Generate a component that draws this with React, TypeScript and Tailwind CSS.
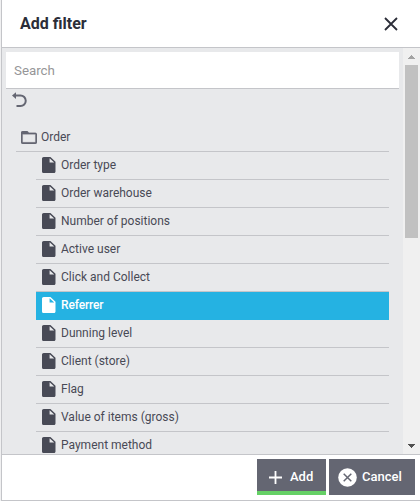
const items = [
  'Order type',
  'Order warehouse',
  'Number of positions',
  'Active user',
  'Click and Collect',
  'Referrer',
  'Dunning level',
  'Client (store)',
  'Flag',
  'Value of items (gross)',
  'Payment method',
];

function FileIcon() {
  return (
    <svg viewBox="4 2 16 20" preserveAspectRatio="none" className="-mt-0.5 h-4 w-[13.5px] shrink-0" fill="currentColor">
      <path d="M6 2c-1.100 0-1.990.9-1.990 2L4 20c0 1.100.89 2 1.990 2H18c1.100 0 2-.9 2-2V8l-6-6H6zm7 7V3.500L18.500 9H13z" />
    </svg>
  );
}

function Row({ label, active }: { label: string; active: boolean }) {
  return (
    <li
      className={
        'flex h-7 shrink-0 items-center gap-[5.5px] border-b pl-1.5 pt-px ' +
        (active
          ? 'border-[#25b2e2] bg-[#25b2e2] font-medium text-white'
          : 'border-[#c4c5c9] text-[#484a56]')
      }
    >
      <FileIcon />
      <span className={active ? '-mt-0.5 tracking-[-0.15px]' : '-mt-0.5'}>{label}</span>
    </li>
  );
}

export default function App() {
  return (
    <div className="flex h-[501px] w-[420px] overflow-hidden bg-[#f0f0f1] pl-px font-['Roboto',sans-serif] text-[12px] leading-4 text-[#484a56]">
      <section className="flex min-w-0 flex-1 flex-col border-b border-l border-[#c4c5c9] bg-white">
        <header className="flex h-12 shrink-0 items-center justify-between border-b border-[#c4c5c9] pl-[18px] pr-[22px]">
          <h1 className="text-[16px] font-bold leading-5 text-[#2b2d38]">Add filter</h1>
          <svg viewBox="0 0 14 14" className="h-3.5 w-3.5" fill="none" stroke="#2b2d38" strokeWidth="1.800">
            <path d="M1 1l12 12M13 1L1 13" />
          </svg>
        </header>
        <div className="flex h-[406px] shrink-0 bg-[#e8e9eb]">
          <main className="flex min-w-0 flex-1 flex-col overflow-hidden pl-1 pr-1 pt-1">
            <input
              placeholder="Search"
              className="h-[37px] w-full shrink-0 border-b border-[#c4c5c9] bg-white px-2 text-[13.33px] outline-none placeholder:text-[#969698]"
            />
            <div className="h-[35px] shrink-0 pl-1.5 pt-[3px]">
              <svg viewBox="0 0 15 16" className="h-4 w-[15px]" fill="none" stroke="#646672" strokeWidth="2">
                <path d="M3 3.500H8.500a5 5 0 0 1 0 10.500H4.500" />
                <path d="M0 3.500L4 .3v6.800z" fill="#646672" stroke="none" />
              </svg>
            </div>
            <div className="ml-2.5 mr-2.5 flex h-7 shrink-0 items-center gap-1 border-b border-[#c4c5c9] pl-[5px]">
              <svg viewBox="2 4 20 16" className="h-[13px] w-4" fill="#646672" stroke="#646672" strokeWidth=".3">
                <path d="M20 6h-8l-2-2H4c-1.100 0-1.990.9-1.990 2L2 18c0 1.100.9 2 2 2h16c1.100 0 2-.9 2-2V8c0-1.100-.9-2-2-2zm0 12H4V8h16v10z" />
              </svg>
              <span className="-mt-px">Order</span>
            </div>
            <ul className="ml-[30px] mr-2.5 flex flex-col">
              {items.map((label) => (
                <Row key={label} label={label} active={label === 'Referrer'} />
              ))}
            </ul>
          </main>
          <div className="flex w-[17px] shrink-0 flex-col items-center justify-between bg-[#f0f0f0]">
            <div className="flex flex-col items-center">
              <div className="flex h-[17px] items-center">
                <svg viewBox="0 0 7 4" className="h-1 w-[7px]" fill="#a3a3a3" shapeRendering="crispEdges">
                  <path d="M3 0h1v1h1v1h1v1h1v1H0V3h1V2h1V1h1z" />
                </svg>
              </div>
              <div className="h-[173px] w-[13px] bg-[#c1c1c1]" />
            </div>
            <div className="flex h-[17px] items-center">
              <svg viewBox="0 0 7 4" className="h-1 w-[7px]" fill="#505050" shapeRendering="crispEdges">
                <path d="M0 0h7v1H6v1H5v1H4v1H3V3H2V2H1V1H0z" />
              </svg>
            </div>
          </div>
        </div>
        <footer className="flex flex-1 justify-end gap-[3px] border-t border-[#c4c5c9] pr-[5px] pt-1 text-[13px] font-medium text-white">
          <button className="flex h-9 w-[69px] items-center gap-2 border-b-4 border-[#65d066] bg-[#646672] pl-3 pt-1">
            <svg viewBox="0 0 13 13" className="h-[13px] w-[13px]" fill="none" stroke="white" strokeWidth="1.800">
              <path d="M6.500 0v13M0 6.500h13" />
            </svg>
            <span className="-mt-px">Add</span>
          </button>
          <button className="flex h-9 w-[86px] items-center gap-[5px] bg-[#646672] pl-[9px]">
            <svg viewBox="0 0 19 19" className="h-[19px] w-[19px]">
              <circle cx="9.500" cy="9.500" r="9.300" fill="white" />
              <path d="M5.700 5.700l7.600 7.600M13.300 5.700l-7.600 7.600" stroke="#646672" strokeWidth="1.500" />
            </svg>
            <span className="-mt-px">Cancel</span>
          </button>
        </footer>
      </section>
    </div>
  );
}
